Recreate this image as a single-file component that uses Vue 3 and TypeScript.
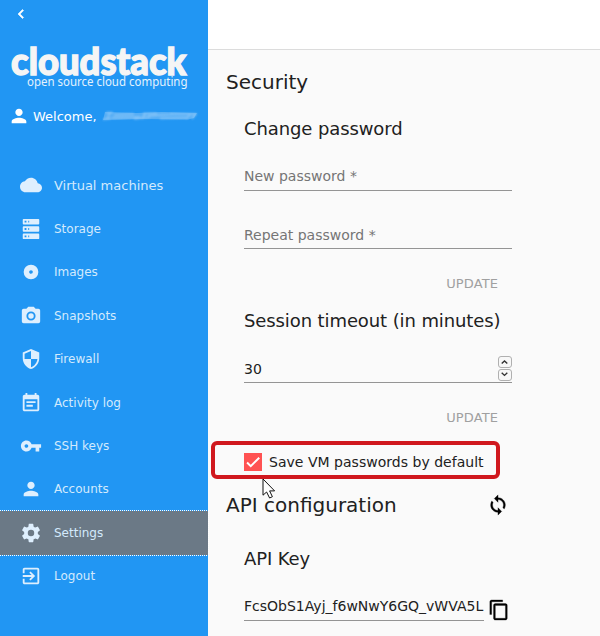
<script setup lang="ts">
import { ref } from 'vue'

interface NavItem {
  label: string
  path: string
  large?: boolean
}

const items: NavItem[] = [
  { label: 'Virtual machines', large: true, path: 'M19.35 10.04C18.67 6.59 15.64 4 12 4 9.11 4 6.6 5.64 5.35 8.04 2.34 8.36 0 10.91 0 14c0 3.31 2.69 6 6 6h13c2.76 0 5-2.24 5-5 0-2.64-2.05-4.78-4.65-4.96z' },
  { label: 'Storage', path: 'M4 1H20A1 1 0 0 1 21 2V6A1 1 0 0 1 20 7H4A1 1 0 0 1 3 6V2A1 1 0 0 1 4 1M4 9H20A1 1 0 0 1 21 10V14A1 1 0 0 1 20 15H4A1 1 0 0 1 3 14V10A1 1 0 0 1 4 9M4 17H20A1 1 0 0 1 21 18V22A1 1 0 0 1 20 23H4A1 1 0 0 1 3 22V18A1 1 0 0 1 4 17M9 5H10V3H9V5M9 13H10V11H9V13M9 21H10V19H9V21M5 3V5H7V3H5M5 11V13H7V11H5M5 19V21H7V19H5Z' },
  { label: 'Images', path: 'M12 14C10.89 14 10 13.1 10 12C10 10.89 10.89 10 12 10C13.11 10 14 10.89 14 12A2 2 0 0 1 12 14M12 4A8 8 0 0 0 4 12A8 8 0 0 0 12 20A8 8 0 0 0 20 12A8 8 0 0 0 12 4Z' },
  { label: 'Snapshots', path: 'M4 4H7L9 2H15L17 4H20A2 2 0 0 1 22 6V18A2 2 0 0 1 20 20H4A2 2 0 0 1 2 18V6A2 2 0 0 1 4 4M12 7A5 5 0 0 0 7 12A5 5 0 0 0 12 17A5 5 0 0 0 17 12A5 5 0 0 0 12 7M12 9A3 3 0 0 1 15 12A3 3 0 0 1 12 15A3 3 0 0 1 9 12A3 3 0 0 1 12 9Z' },
  { label: 'Firewall', path: 'M12 1L3 5v6c0 5.55 3.84 10.74 9 12 5.16-1.26 9-6.45 9-12V5l-9-4zm0 10.99h7c-.53 4.12-3.28 7.79-7 8.94V12H5V6.3l7-3.11v8.8z' },
  { label: 'Activity log', path: 'M17 10H7v2h10v-2zm2-7h-1V1h-2v2H8V1H6v2H5c-1.11 0-1.99.9-1.99 2L3 19c0 1.1.89 2 2 2h14c1.1 0 2-.9 2-2V5c0-1.1-.9-2-2-2zm0 16H5V8h14v11zm-5-5H7v2h7v-2z' },
  { label: 'SSH keys', path: 'M12.65 10C11.83 7.67 9.61 6 7 6c-3.31 0-6 2.69-6 6s2.69 6 6 6c2.61 0 4.83-1.67 5.65-4H17v4h4v-4h2v-4H12.65zM7 14c-1.1 0-2-.9-2-2s.9-2 2-2 2 .9 2 2-.9 2-2 2z' },
  { label: 'Accounts', path: 'M12 12c2.21 0 4-1.79 4-4s-1.79-4-4-4-4 1.79-4 4 1.79 4 4 4zm0 2c-2.67 0-8 1.34-8 4v2h16v-2c0-2.66-5.33-4-8-4z' },
  { label: 'Settings', path: 'M12 15.5A3.5 3.5 0 0 1 8.5 12 3.5 3.5 0 0 1 12 8.5a3.5 3.5 0 0 1 3.5 3.5 3.5 3.5 0 0 1-3.5 3.5m7.43-2.53c.04-.32.07-.64.07-.97s-.03-.66-.07-1l2.11-1.63c.19-.15.24-.42.12-.64l-2-3.46c-.12-.22-.39-.31-.61-.22l-2.49 1c-.52-.39-1.06-.73-1.69-.98l-.37-2.65A.506.506 0 0 0 14 2h-4c-.25 0-.46.18-.5.42l-.37 2.65c-.63.25-1.17.59-1.69.98l-2.49-1c-.22-.09-.49 0-.61.22l-2 3.46c-.13.22-.07.49.12.64L4.57 11c-.04.34-.07.67-.07 1s.03.65.07.97l-2.11 1.66c-.19.15-.25.42-.12.64l2 3.46c.12.22.39.3.61.22l2.49-1.01c.52.4 1.06.74 1.69.99l.37 2.65c.04.24.25.42.5.42h4c.25 0 .46-.18.5-.42l.37-2.65c.63-.26 1.17-.59 1.69-.99l2.49 1.01c.22.08.49 0 .61-.22l2-3.46c.12-.22.07-.49-.12-.64l-2.11-1.66z' },
  { label: 'Logout', path: 'M10.09 15.59L11.5 17l5-5-5-5-1.41 1.41L12.67 11H3v2h9.67l-2.58 2.59zM19 3H5c-1.11 0-2 .9-2 2v4h2V5h14v14H5v-4H3v4c0 1.1.89 2 2 2h14c1.1 0 2-.9 2-2V5c0-1.1-.9-2-2-2z' },
]

const active = ref('Settings')
const timeout = ref(30)
const savePasswords = ref(true)
</script>

<template>
  <div class="app">
    <aside class="sidebar">
      <div class="collapse">
        <svg width="18" height="18" viewBox="0 0 24 24"><path d="M15.41 7.41L14 6l-6 6 6 6 1.41-1.41L10.83 12z" /></svg>
      </div>
      <svg class="logo" width="208" height="56" viewBox="0 0 208 56">
        <text class="logo-name" x="11" y="39.8" textLength="175.5" lengthAdjust="spacingAndGlyphs">cloudstack</text>
        <text class="logo-tag" x="27" y="51" textLength="160.5" lengthAdjust="spacingAndGlyphs">open source cloud computing</text>
      </svg>
      <div class="user">
        <svg width="22" height="22" viewBox="0 0 24 24"><path d="M12 12c2.21 0 4-1.79 4-4s-1.79-4-4-4-4 1.79-4 4 1.79 4 4 4zm0 2c-2.67 0-8 1.34-8 4v2h16v-2c0-2.66-5.33-4-8-4z" /></svg>
        <span>Welcome,</span>
        <svg class="smudge" width="98" height="12" viewBox="0 0 98 12">
          <path class="haze" d="M3 2L34 3 60 2 95 3 92 8 86 9.5 40 9 1 10z" />
          <path class="streak" d="M4 2.5h7M1 9.5l8-1M8 3L5 9M12 5l20-1M10 8l28-1M32 9l16-2M41 3.5h14M43 4l-3 5M46 6l26-2M58 8.5l28-1M68 4l27 0M84 9l4-4M94 4l-4 5" />
        </svg>
      </div>
      <nav class="nav">
        <a
          v-for="item in items"
          :key="item.label"
          class="nav-item"
          :class="{ active: item.label === active, large: item.large }"
          @click="active = item.label"
        >
          <svg width="22" height="22" viewBox="0 0 24 24"><path fill-rule="evenodd" :d="item.path" /></svg>
          <span>{{ item.label }}</span>
        </a>
      </nav>
    </aside>

    <main class="main">
      <header class="toolbar"></header>
      <section class="content">
        <h2 class="security">Security</h2>
        <h3 class="change">Change password</h3>
        <div class="field new">New password *</div>
        <div class="field repeat">Repeat password *</div>
        <button class="update">UPDATE</button>
        <h3 class="session">Session timeout (in minutes)</h3>
        <div class="field value timeout">
          <span>{{ timeout }}</span>
          <span class="spinner">
            <button @click="timeout++"><svg width="11" height="10" viewBox="0 0 11 10"><path d="M2.7 6.6L5.5 4l2.8 2.6" /></svg></button>
            <button @click="timeout--"><svg width="11" height="10" viewBox="0 0 11 10"><path d="M2.7 2.8l2.8 2.6 2.8-2.6" /></svg></button>
          </span>
        </div>
        <button class="update">UPDATE</button>
        <div class="highlight">
          <label class="check" @click="savePasswords = !savePasswords">
            <span class="box">
              <svg v-if="savePasswords" width="18" height="18" viewBox="0 0 24 24"><path d="M4.1 12.7L9 17.6 20.3 6.3" /></svg>
            </span>
            <span>Save VM passwords by default</span>
          </label>
          <svg class="cursor" width="14" height="22" viewBox="0 0 14 22"><path d="M1 1v16.2l3.6-3.2 3 6 2.8-1.3-2.8-5.8h5z" /></svg>
        </div>
        <div class="api-head">
          <h2>API configuration</h2>
          <svg width="22" height="22" viewBox="0 0 24 24"><path d="M12 4V1L8 5l4 4V6c3.31 0 6 2.69 6 6 0 1.01-.25 1.97-.7 2.8l1.46 1.46C19.54 15.03 20 13.57 20 12c0-4.42-3.58-8-8-8zm0 14c-3.31 0-6-2.69-6-6 0-1.01.25-1.97.7-2.8L5.24 7.74C4.46 8.97 4 10.43 4 12c0 4.42 3.58 8 8 8v3l4-4-4-4v3z" /></svg>
        </div>
        <h3 class="key-title">API Key</h3>
        <div class="key-row">
          <div class="field value key">FcsObS1Ayj_f6wNwY6GQ_vWVA5L</div>
          <svg width="22" height="22" viewBox="0 0 24 24"><path d="M16 1H4c-1.1 0-2 .9-2 2v14h2V3h12V1zm3 4H8c-1.1 0-2 .9-2 2v14c0 1.1.9 2 2 2h11c1.1 0 2-.9 2-2V7c0-1.1-.9-2-2-2zm0 16H8V7h11v14z" /></svg>
        </div>
      </section>
    </main>
  </div>
</template>

<style>
body {
  overflow: hidden;
}
</style>

<style scoped>
.app {
  display: flex;
  width: 600px;
  height: 636px;
  overflow: hidden;
  font-family: "DejaVu Sans", sans-serif;
  color: #212121;
  background: #fafafa;
}
svg {
  display: block;
  flex: none;
}
h2,
h3 {
  margin: 0;
  font-weight: 400;
  white-space: nowrap;
}
h2 {
  font-size: 20px;
  line-height: 32px;
}
h3 {
  font-size: 18px;
  line-height: 28px;
  margin-left: 18px;
  letter-spacing: -0.1px;
}
button {
  padding: 0;
  border: 0;
  background: none;
  font-family: inherit;
}
.sidebar {
  width: 208px;
  flex: none;
  background: #2196f3;
  color: #fff;
  fill: #fff;
}
.collapse {
  height: 40px;
  padding: 5px 0 0 12px;
  box-sizing: border-box;
}
.collapse path {
  stroke: #fff;
  stroke-width: 0.8;
}
.logo-name {
  font: 900 38px Lato, sans-serif;
  fill: #f5f5f5;
  stroke: #f5f5f5;
  stroke-width: 1.4;
}
.logo-tag {
  font: 12px "Noto Sans", sans-serif;
  fill: #e3f2fd;
}
.logo {
  margin-top: -5px;
}
.user {
  display: flex;
  align-items: center;
  height: 24px;
  margin-top: 13px;
  padding-left: 8px;
  font-size: 13px;
}
.user span {
  margin-left: 3px;
}
.smudge {
  margin-left: 5px;
}
.haze {
  fill: #64b5f6;
  opacity: 0.8;
  filter: blur(0.7px);
}
.streak {
  fill: none;
  stroke: #a8d5fa;
  stroke-width: 1.5;
  opacity: 0.6;
  filter: blur(0.8px);
}
.nav {
  margin-top: 35.7px;
}
.nav-item {
  display: flex;
  align-items: center;
  height: 43.45px;
  padding-left: 20px;
  gap: 12px;
  font-size: 12px;
  color: #d3eafd;
  fill: #deeffe;
}
.nav-item.large {
  font-size: 13px;
}
.nav-item.active {
  background: #6b7986;
  outline: 1px dotted #fff;
}
.main {
  flex: 1;
  min-width: 0;
}
.toolbar {
  height: 49px;
  background: #fff;
  border-bottom: 1px solid #dcdcdc;
}
.content {
  display: flex;
  flex-direction: column;
  padding: 16px 88px 0 18px;
}
.change {
  margin-top: 17px;
}
.field {
  margin-left: 18px;
  font-size: 14px;
  line-height: 24px;
  color: #757575;
  border-bottom: 1px solid #949494;
}
.value {
  color: #212121;
}
.new {
  margin-top: 21px;
  padding-bottom: 2px;
}
.repeat {
  margin-top: 32px;
  padding-bottom: 1px;
}
.update {
  align-self: flex-end;
  margin: 25px 14px 0 0;
  height: 19px;
  font-size: 13px;
  line-height: 19px;
  letter-spacing: 0.1px;
  color: #a0a0a0;
}
.session {
  margin-top: 14px;
}
.timeout {
  display: flex;
  justify-content: space-between;
  align-items: center;
  margin-top: 22px;
  padding-bottom: 1px;
  height: 24px;
}
.spinner {
  display: flex;
  flex-direction: column;
  gap: 1px;
  margin-top: -1px;
}
.spinner button {
  width: 14px;
  height: 12px;
  border: 1px solid #b0b0b0;
  border-radius: 3px;
  background: #f8f8f8;
}
.spinner path {
  fill: none;
  stroke: #333;
  stroke-width: 1.4;
}
.highlight {
  position: relative;
  box-sizing: border-box;
  width: 289px;
  height: 38px;
  margin: 14px 0 0 -15px;
  border: 4px solid #d0181e;
  border-radius: 6px;
}
.check {
  display: flex;
  align-items: center;
  height: 34px;
  padding-left: 29px;
  gap: 7px;
  font-size: 14px;
  letter-spacing: 0.02px;
  white-space: nowrap;
}
.box {
  width: 18px;
  height: 18px;
  background: #ff5252;
}
.box path {
  fill: none;
  stroke: #fff;
  stroke-width: 2.6;
}
.cursor {
  position: absolute;
  left: 47px;
  top: 33px;
}
.cursor path {
  fill: #fff;
  stroke: #111;
}
.api-head {
  display: flex;
  align-items: center;
  justify-content: space-between;
  margin: 10px 3px 0 0;
}
.api-head path {
  fill: #000;
  stroke: #000;
  stroke-width: 0.4;
}
.key-title {
  margin-top: 24px;
}
.key-row {
  display: flex;
  align-items: center;
  margin-top: 21px;
  gap: 4px;
}
.key-row svg {
  margin-top: 5px;
}
.key-row path {
  fill: #000;
  stroke: #000;
  stroke-width: 0.3;
}
.key {
  width: 240px;
  padding-bottom: 2px;
  overflow: hidden;
  white-space: nowrap;
}
</style>
